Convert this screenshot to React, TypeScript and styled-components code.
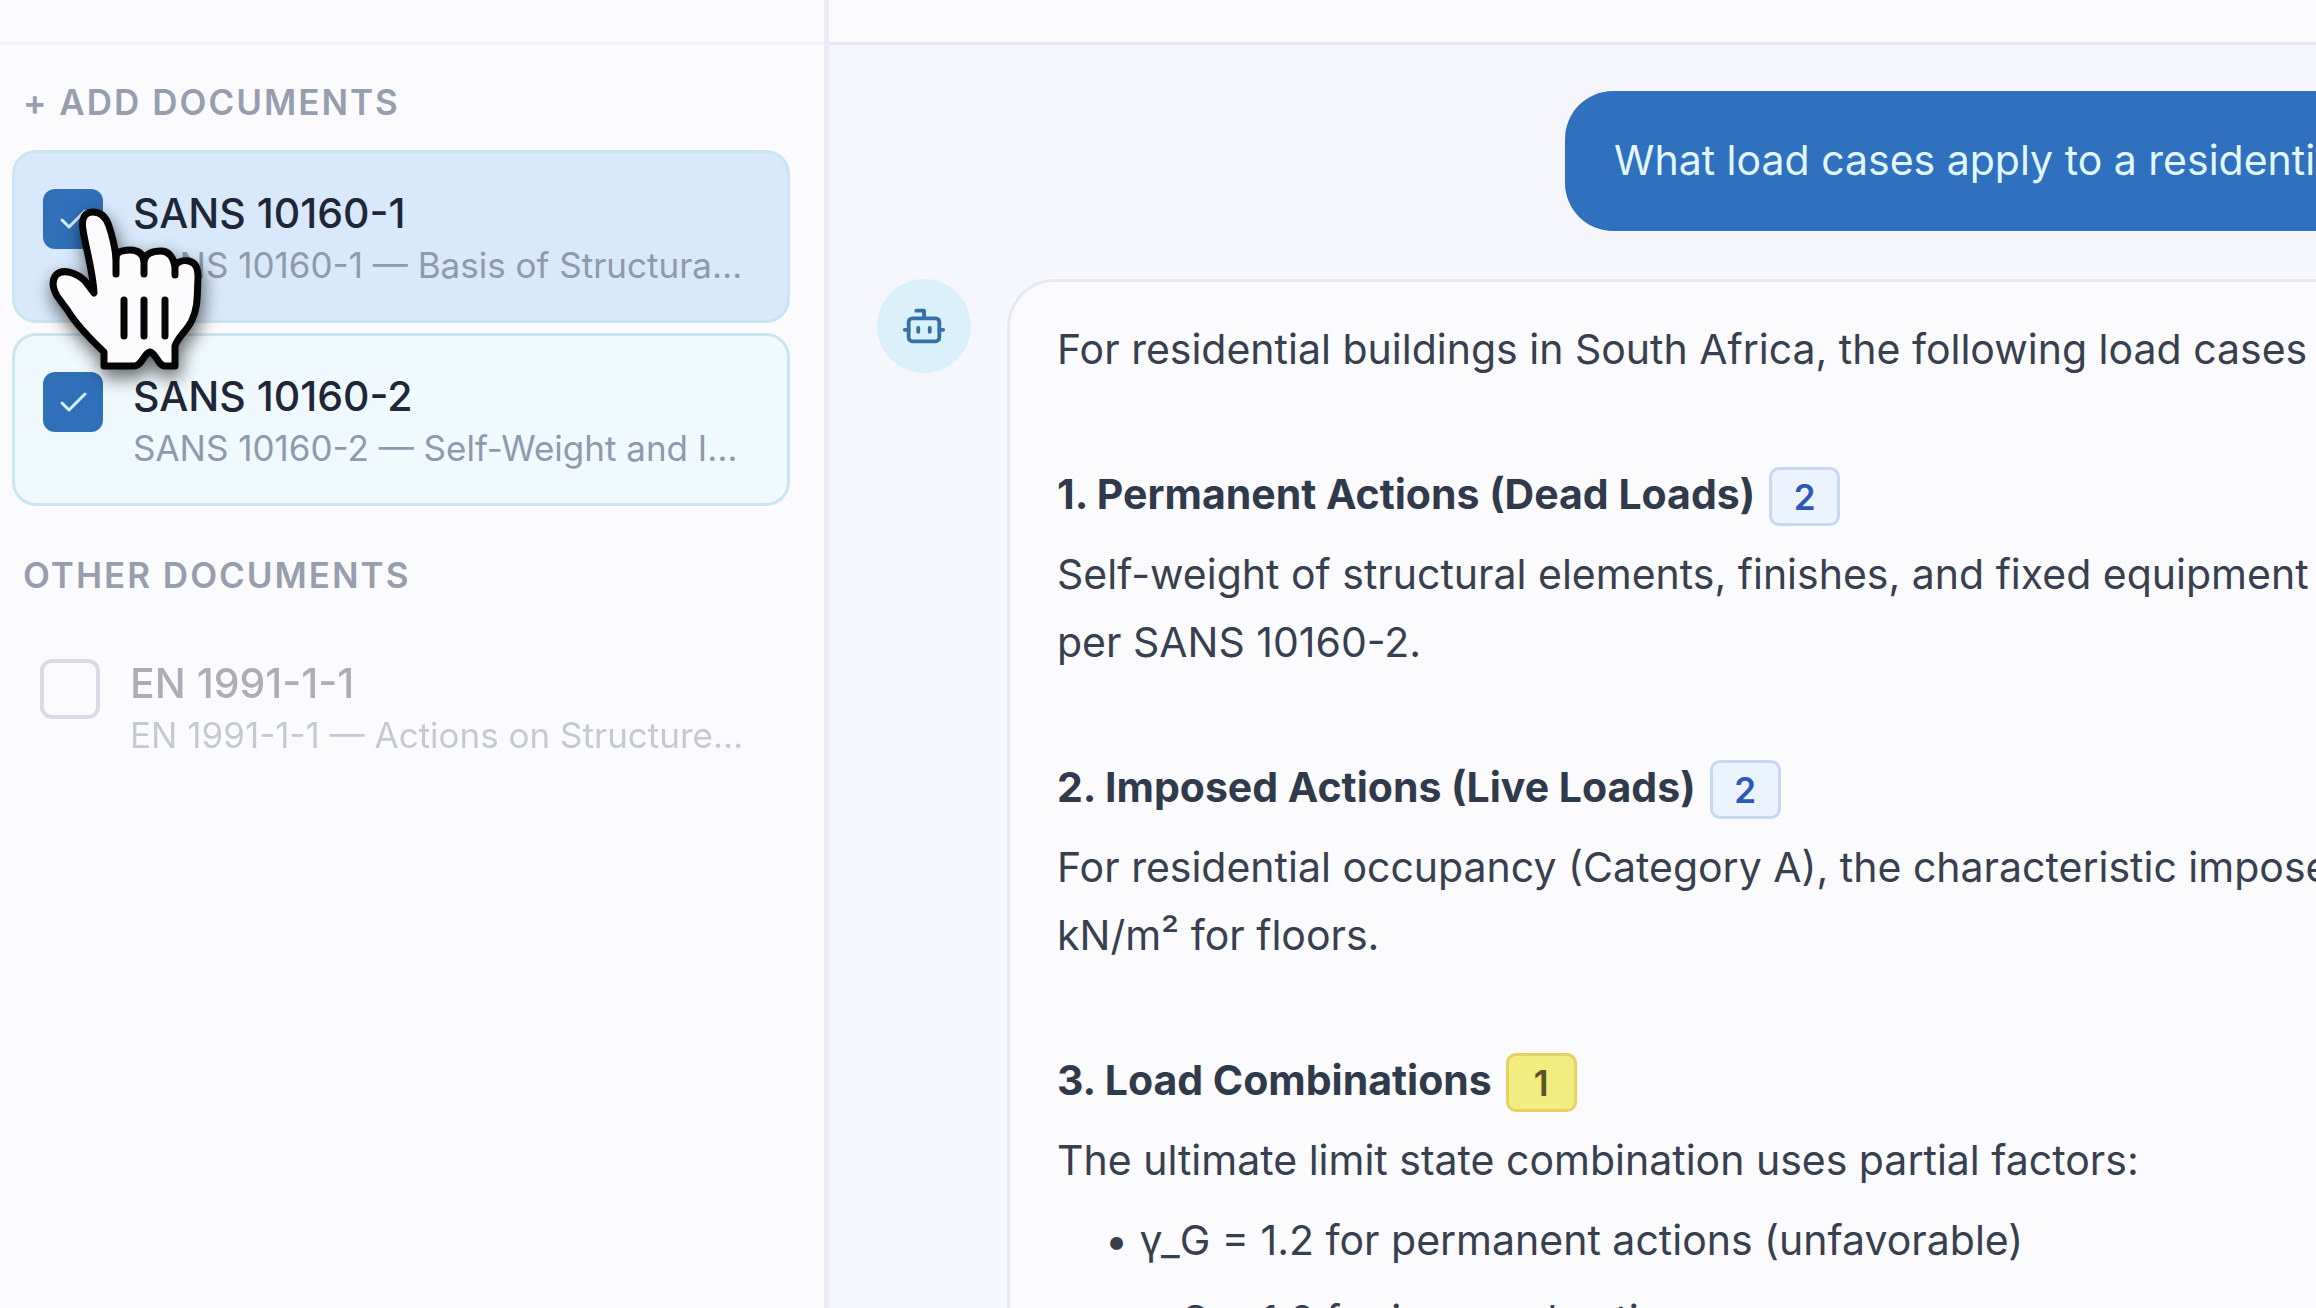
import React from "react";
import styled, { createGlobalStyle, css } from "styled-components";
import { Bot } from "lucide-react";

const GlobalStyle = createGlobalStyle`
  *, *::before, *::after { box-sizing: border-box; }
  html, body, #root { height: 100%; }
  body {
    margin: 0;
    overflow: hidden;
    background: #fbfbfd;
    color: #384050;
    font-family: Inter, "Noto Sans", sans-serif;
    font-size: 41px;
    line-height: 68px;
  }
`;

const Shell = styled.div`
  display: flex;
  height: 100vh;
  overflow: hidden;
`;

const Sidebar = styled.aside`
  flex: none;
  width: 829px;
  border-right: 5px solid #ebecf8;
  background: #fbfbfd;
`;

const TopBar = styled.div<{ $strong?: boolean }>`
  height: 45px;
  border-bottom: 3px solid ${(p) => (p.$strong ? "#e6e9f3" : "#f1f2fa")};
  background: #fbfbfd;
`;

const SidebarBody = styled.div`
  padding: 30px 34px 0 12px;
`;

const GroupTitle = styled.h2`
  margin: 0;
  padding: 0 11px;
  color: #989eae;
  font-size: 35px;
  font-weight: 600;
  line-height: 54px;
  letter-spacing: 2px;
`;

const DocList = styled.div`
  display: flex;
  flex-direction: column;
  gap: 10px;
  padding: 21px 0 42px;
`;

type Tone = "hover" | "selected" | "plain";

const DocCard = styled.label<{ $tone: Tone }>`
  display: flex;
  align-items: flex-start;
  gap: 30px;
  height: 173px;
  padding: 34px 38px 0 28px;
  border: 3px solid #cde5f2;
  border-radius: 24px;
  background: #f0f9fe;
  ${(p) => p.$tone === "hover" && css`background: #d8e9fb;`}
  ${(p) =>
    p.$tone === "plain" &&
    css`
      border: 0;
      background: transparent;
      opacity: 0.5;
    `}
`;

const Tick = styled.input`
  appearance: none;
  flex: none;
  width: 60px;
  height: 60px;
  margin: 2px 0 0;
  border: 4px solid #b9bdd2;
  border-radius: 12px;
  background: transparent;
  &:checked {
    border: 0;
    background: #2f70b8
      url("data:image/svg+xml,%3Csvg xmlns='http://www.w3.org/2000/svg' viewBox='0 0 60 60' fill='none' stroke='%23d8efff' stroke-width='3' stroke-linecap='round' stroke-linejoin='round'%3E%3Cpath d='M19 31l7 7 16-16'/%3E%3C/svg%3E");
  }
`;

const DocText = styled.span`
  flex: 1;
  min-width: 0;
  display: flex;
  flex-direction: column;
`;

const DocName = styled.span<{ $muted: boolean }>`
  color: ${(p) => (p.$muted ? "#5f6470" : "#1f2638")};
  font-weight: 500;
  line-height: 52px;
`;

const DocDetail = styled.span`
  overflow: hidden;
  color: #8e9aad;
  font-size: 35px;
  line-height: 52px;
  text-overflow: ellipsis;
  white-space: nowrap;
`;

const Main = styled.main`
  flex: 1;
  min-width: 0;
  background: #f6f7fd;
`;

const Thread = styled.div`
  display: flex;
  flex-direction: column;
  gap: 48px;
  padding: 46px 0 0 48px;
`;

const UserRow = styled.div`
  display: flex;
  padding-left: 688px;
`;

const UserBubble = styled.div`
  flex: none;
  padding: 35px 49px 37px;
  border-radius: 48px;
  background: #2f70bf;
  color: #e3f7ff;
  white-space: nowrap;
`;

const BotRow = styled.div`
  display: flex;
  align-items: flex-start;
  gap: 36px;
`;

const Avatar = styled.div`
  display: flex;
  flex: none;
  align-items: center;
  justify-content: center;
  width: 94px;
  height: 94px;
  border-radius: 50%;
  background: #daf0fb;
  color: #3272a6;
`;

const BotBubble = styled.article`
  flex: none;
  padding: 33px 47px;
  border: 3px solid #e6e8f2;
  border-radius: 48px;
  background: #fbfbfd;
  white-space: nowrap;
`;

const Para = styled.p`
  margin: 0 0 12px;
`;

const SectionTitle = styled.h3`
  display: flex;
  align-items: center;
  gap: 14px;
  margin: 77px 0 12px;
  color: #313a4b;
  font-size: 41px;
  font-weight: 700;
  line-height: 68px;
`;

const Cite = styled.button<{ $active?: boolean }>`
  width: 71px;
  height: 59px;
  margin: 5px 0 0;
  padding: 0;
  border: 3px solid ${(p) => (p.$active ? "#e8d25f" : "#c8d8f2")};
  border-radius: 10px;
  background: ${(p) => (p.$active ? "#f3ec80" : "#ebf4fe")};
  color: ${(p) => (p.$active ? "#5a5426" : "#2d57b8")};
  font-family: inherit;
  font-size: 35px;
  font-weight: 600;
  line-height: 52px;
`;

const Bullets = styled.ul`
  margin: 0;
  padding: 0 0 0 48px;
  list-style: none;
`;

const Bullet = styled.li`
  margin-bottom: 12px;
`;

const Pointer = styled.svg`
  position: absolute;
  left: 36px;
  top: 196px;
  width: 190px;
  height: 200px;
  pointer-events: none;
  filter: drop-shadow(2px 8px 9px rgba(0, 0, 0, 0.6));
`;

const docs: { name: string; detail: string; tone: Tone }[] = [
  { name: "SANS 10160-1", detail: "SANS 10160-1 — Basis of Structural Design", tone: "hover" },
  { name: "SANS 10160-2", detail: "SANS 10160-2 — Self-Weight and Imposed Loads", tone: "selected" },
];
const otherDocs: { name: string; detail: string; tone: Tone }[] = [
  { name: "EN 1991-1-1", detail: "EN 1991-1-1 — Actions on Structures: General Actions", tone: "plain" },
];

function Doc({ name, detail, tone }: { name: string; detail: string; tone: Tone }) {
  return (
    <DocCard $tone={tone}>
      <Tick type="checkbox" defaultChecked={tone !== "plain"} />
      <DocText>
        <DocName $muted={tone === "plain"}>{name}</DocName>
        <DocDetail>{detail}</DocDetail>
      </DocText>
    </DocCard>
  );
}

export default function App() {
  return (
    <>
      <GlobalStyle />
      <Shell>
        <Sidebar>
          <TopBar />
          <SidebarBody>
            <GroupTitle>+ ADD DOCUMENTS</GroupTitle>
            <DocList>
              {docs.map((d) => (
                <Doc key={d.name} {...d} />
              ))}
            </DocList>
            <GroupTitle>OTHER DOCUMENTS</GroupTitle>
            <DocList>
              {otherDocs.map((d) => (
                <Doc key={d.name} {...d} />
              ))}
            </DocList>
          </SidebarBody>
        </Sidebar>
        <Main>
          <TopBar $strong />
          <Thread>
            <UserRow>
              <UserBubble>What load cases apply to a residential building?</UserBubble>
            </UserRow>
            <BotRow>
              <Avatar>
                <Bot size={46} strokeWidth={2} />
              </Avatar>
              <BotBubble>
                <Para>For residential buildings in South Africa, the following load cases apply:</Para>
                <SectionTitle>
                  1. Permanent Actions (Dead Loads) <Cite>2</Cite>
                </SectionTitle>
                <Para>
                  Self-weight of structural elements, finishes, and fixed equipment
                  <br />
                  per SANS 10160-2.
                </Para>
                <SectionTitle>
                  2. Imposed Actions (Live Loads) <Cite>2</Cite>
                </SectionTitle>
                <Para>
                  For residential occupancy (Category A), the characteristic imposed
                  <br />
                  kN/m² for floors.
                </Para>
                <SectionTitle>
                  3. Load Combinations <Cite $active>1</Cite>
                </SectionTitle>
                <Para>The ultimate limit state combination uses partial factors:</Para>
                <Bullets>
                  <Bullet>• γ_G = 1.2 for permanent actions (unfavorable)</Bullet>
                  <Bullet>• γ_Q = 1.6 for imposed actions</Bullet>
                </Bullets>
              </BotBubble>
            </BotRow>
          </Thread>
        </Main>
      </Shell>
      <Pointer viewBox="36 196 190 200" aria-hidden="true">
        <path
          d="M104 366 V352 C85 334 76 324 68 311 L57 296 C52 287 52 280 56 275 C63 268 77 273 85 281 L94 293 C93 272 86 249 83 230 C81 218 85 212 93 212 C101 212 106 217 109 226 C113 238 115 248 116 258 C115 253 121 250 130 250 C139 250 143 254 144 261 C145 254 152 251 161 251 C169 251 173 257 175 266 C178 261 184 260 189 261 C197 263 198 270 198 278 C197 296 198 308 192 320 C188 330 178 336 175 346 V366 H165 C158 366 156 353 150 352 C144 353 142 366 134 366 Z"
          fill="#fcfcff"
          stroke="#050505"
          strokeWidth="7"
          strokeLinejoin="round"
        />
        <path
          d="M116 256 V274 M144 258 V274 M175 262 V275 M124 300 V336 M144 300 V336 M165 300 V336"
          fill="none"
          stroke="#050505"
          strokeWidth="7"
          strokeLinecap="round"
        />
      </Pointer>
    </>
  );
}
